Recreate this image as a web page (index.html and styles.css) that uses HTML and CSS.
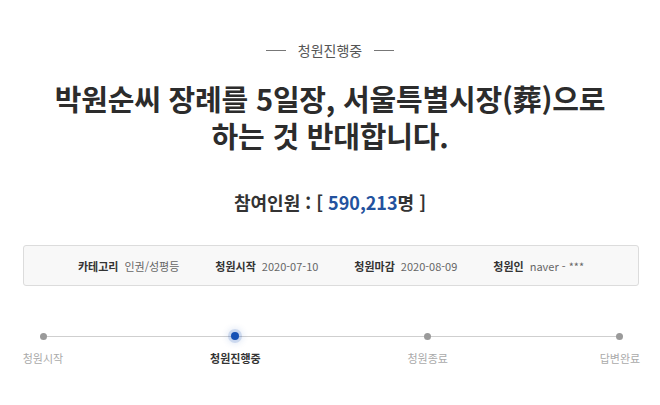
FILE: index.html
```html
<!DOCTYPE html>
<html lang="ko">
<head>
  <meta charset="utf-8">
  <title>청원진행중</title>
  <link rel="stylesheet" href="styles.css">
</head>
<body>
  <div class="petition">
    <div class="status"><span class="status-text">청원진행중</span></div>

    <h1 class="petition-title">박원순씨 장례를 5일장, 서울특별시장(葬)으로<br>하는 것 반대합니다.</h1>

    <p class="count">참여인원 : [ <span class="count-num">590,213</span>명 ]</p>

    <ul class="info">
      <li><strong>카테고리</strong><span>인권/성평등</span></li>
      <li><strong>청원시작</strong><span>2020-07-10</span></li>
      <li><strong>청원마감</strong><span>2020-08-09</span></li>
      <li><strong>청원인</strong><span>naver - ***</span></li>
    </ul>

    <ol class="steps">
      <li class="step"><i class="dot"></i><span>청원시작</span></li>
      <li class="step active"><i class="dot"></i><span>청원진행중</span></li>
      <li class="step"><i class="dot"></i><span>청원종료</span></li>
      <li class="step"><i class="dot"></i><span>답변완료</span></li>
    </ol>
  </div>
</body>
</html>
```

FILE: styles.css
```css
body {
  margin: 0;
  background: #fff;
  font-family: "Noto Sans CJK KR", "Noto Sans", sans-serif;
  color: #333;
}

.petition {
  padding-top: 40px;
}

/* status heading with dashes on both sides */
.status {
  display: flex;
  justify-content: center;
  align-items: center;
  height: 20px;
}

.status-text {
  display: flex;
  align-items: center;
  gap: 12px;
  font-size: 14px;
  color: #555;
}

.status-text::before,
.status-text::after {
  content: "";
  width: 20px;
  height: 1px;
  background: #777;
}

.petition-title {
  margin: 20px 0 0;
  text-align: center;
  font-size: 29px;
  line-height: 37px;
  font-weight: 700;
  letter-spacing: -0.2px;
  color: #2c2c2c;
}

.count {
  margin: 36px 0 0;
  text-align: center;
  font-size: 18px;
  line-height: 24px;
  font-weight: 700;
  color: #333;
}

.count-num {
  color: #23529e;
}

.info {
  list-style: none;
  margin: 31px 21px 0 23px;
  padding: 0;
  height: 39px;
  display: flex;
  justify-content: center;
  align-items: center;
  gap: 36px;
  background: #f8f8f8;
  border: 1px solid #dcdcdc;
  border-radius: 3px;
  font-size: 11px;
}

.info li {
  display: flex;
  gap: 6px;
}

.info strong {
  color: #333;
}

.info span {
  color: #666;
}

/* progress track */
.steps {
  list-style: none;
  position: relative;
  margin: 44px 0 0 3px;
  padding: 0;
  display: flex;
  justify-content: space-between;
}

.steps::before {
  content: "";
  position: absolute;
  left: 40px;
  right: 40px;
  top: 6px;
  height: 1px;
  background: #cfcfcf;
}

.step {
  width: 80px;
  display: flex;
  flex-direction: column;
  align-items: center;
  gap: 8px;
}

.dot {
  position: relative;
  display: block;
  width: 7px;
  height: 7px;
  margin: 2.5px 0;
  border-radius: 50%;
  background: #9a9a9a;
}

.step span {
  font-size: 11px;
  line-height: 16px;
  color: #aaa;
}

.step.active .dot {
  width: 8px;
  height: 8px;
  margin: 2px 0;
  background: #1651b4;
  box-shadow: 0 0 0 3px rgba(22, 81, 180, 0.15), 0 0 6px 4px rgba(22, 81, 180, 0.12);
}

.step.active span {
  font-weight: 700;
  color: #333;
}
```
